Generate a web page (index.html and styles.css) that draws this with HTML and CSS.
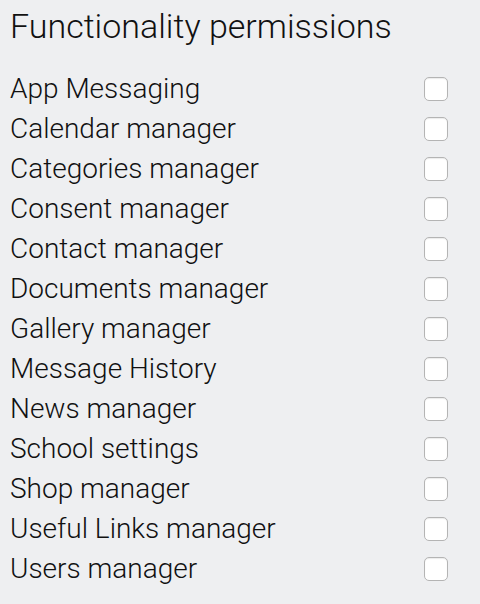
FILE: index.html
```html
<!DOCTYPE html>
<html>
<head>
<meta charset="utf-8">
<link rel="stylesheet" href="styles.css">
</head>
<body>
<div class="panel">
  <h2 class="title">Functionality permissions</h2>
  <ul class="list">
    <li class="row"><span class="label">App Messaging</span><span class="box"></span></li>
    <li class="row"><span class="label">Calendar manager</span><span class="box"></span></li>
    <li class="row"><span class="label">Categories manager</span><span class="box"></span></li>
    <li class="row"><span class="label">Consent manager</span><span class="box"></span></li>
    <li class="row"><span class="label">Contact manager</span><span class="box"></span></li>
    <li class="row"><span class="label">Documents manager</span><span class="box"></span></li>
    <li class="row"><span class="label">Gallery manager</span><span class="box"></span></li>
    <li class="row"><span class="label">Message History</span><span class="box"></span></li>
    <li class="row"><span class="label">News manager</span><span class="box"></span></li>
    <li class="row"><span class="label">School settings</span><span class="box"></span></li>
    <li class="row"><span class="label">Shop manager</span><span class="box"></span></li>
    <li class="row"><span class="label">Useful Links manager</span><span class="box"></span></li>
    <li class="row"><span class="label">Users manager</span><span class="box"></span></li>
  </ul>
</div>
</body>
</html>
```
FILE: styles.css
```css
html, body {
  margin: 0;
  padding: 0;
  background: #eeeff1;
}
body {
  font-family: Roboto, "Liberation Sans", sans-serif;
  color: #111;
  width: 480px;
  height: 604px;
}
.panel {
  padding: 0 32px 0 10px;
}
.title {
  margin: 0;
  font-weight: 300;
  font-size: 34px;
  line-height: 50px;
  padding-top: 1px;
  height: 68px;
}
.list {
  list-style: none;
  margin: 0;
  padding: 0;
}
.row {
  display: flex;
  align-items: center;
  justify-content: space-between;
  height: 40px;
}
.label {
  font-size: 28px;
  font-weight: 300;
  margin-top: -2px;
}
.box {
  width: 22px;
  height: 22px;
  border: 1px solid #b4b4b4;
  border-radius: 5px;
  background: #fff;
  box-shadow: inset 0 1px 1px rgba(0,0,0,0.08);
}
```
